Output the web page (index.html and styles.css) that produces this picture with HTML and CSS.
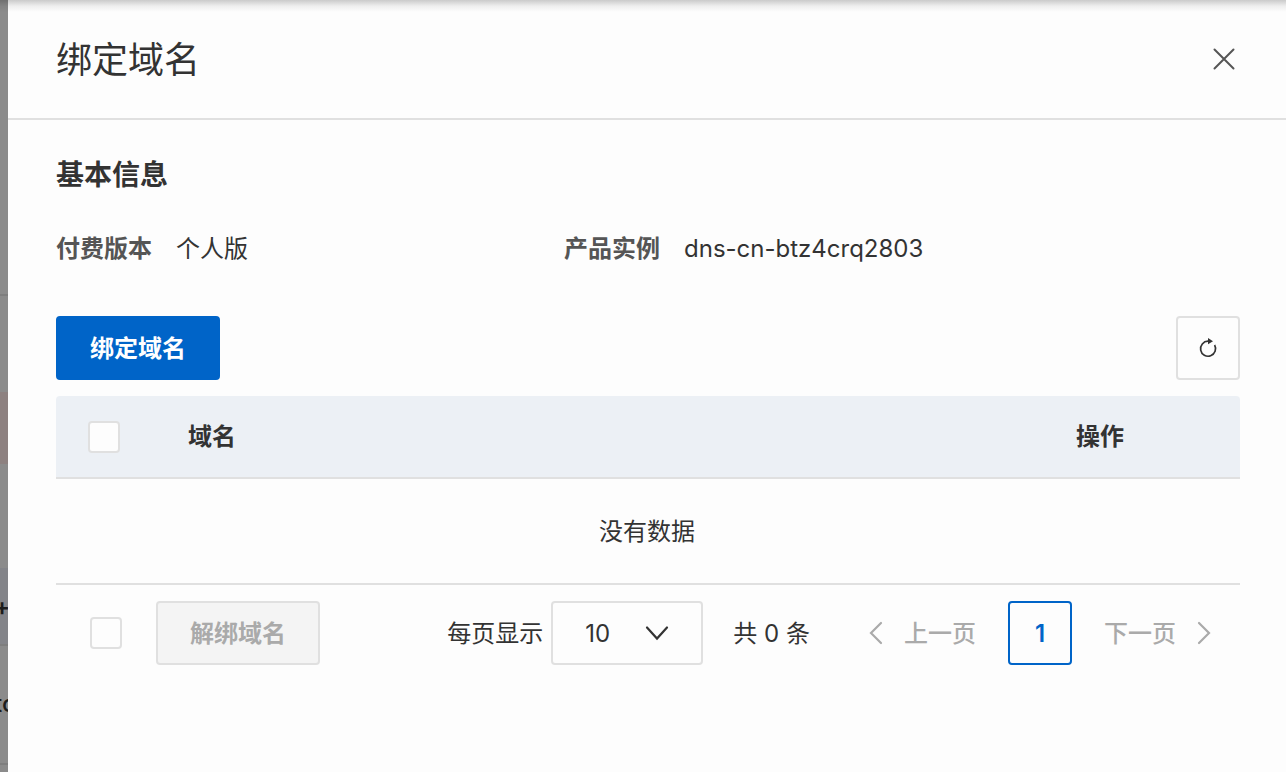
FILE: index.html
```html
<!DOCTYPE html>
<html lang="zh-CN">

<head>
    <meta charset="UTF-8">
    <meta name="viewport" content="width=device-width, initial-scale=1">
    <title>绑定域名</title>
    <link rel="stylesheet" href="styles.css">
</head>

<body>

    <div class="backdrop" aria-hidden="true">
        <div class="backdrop-row top"></div>
        <div class="backdrop-row plain"></div>
        <div class="backdrop-row warn"></div>
        <div class="backdrop-row plain"></div>
        <div class="backdrop-row head">+</div>
        <div class="backdrop-row cell">tc</div>
        <div class="backdrop-row"></div>
    </div>

    <main class="drawer">
        <header class="drawer-header">
            <h1>绑定域名</h1>
            <button class="close" type="button" aria-label="关闭">
                <svg width="24" height="24" viewBox="0 0 24 24" fill="none" stroke="#555" stroke-width="2" stroke-linecap="round">
                    <path d="M2.5 2.5l19 19M21.5 2.5l-19 19" />
                </svg>
            </button>
        </header>

        <div class="drawer-body">
            <h2>基本信息</h2>
            <dl class="info">
                <div class="info-item">
                    <dt>付费版本</dt>
                    <dd>个人版</dd>
                </div>
                <div class="info-item">
                    <dt>产品实例</dt>
                    <dd>dns-cn-btz4crq2803</dd>
                </div>
            </dl>

            <div class="toolbar">
                <button class="btn btn-primary" type="button">绑定域名</button>
                <button class="btn btn-icon" type="button" aria-label="刷新">
                    <svg width="20" height="20" viewBox="0 0 20 20">
                        <path d="M12 3.200H10A7.500 7.500 0 1 0 16.600 7" fill="none" stroke="#333" stroke-width="1.700" />
                        <path d="M10 0l5 3.200-5 3z" fill="#333" />
                    </svg>
                </button>
            </div>

            <table class="table">
                <thead>
                    <tr>
                        <th class="col-check"><input class="check" type="checkbox" aria-label="全选"></th>
                        <th>域名</th>
                        <th class="col-action">操作</th>
                    </tr>
                </thead>
                <tbody>
                    <tr>
                        <td class="empty" colspan="3">没有数据</td>
                    </tr>
                </tbody>
            </table>

            <footer class="footer">
                <div class="batch">
                    <input class="check" type="checkbox" aria-label="全选当前页">
                    <button class="btn" type="button" disabled>解绑域名</button>
                </div>
                <nav class="pager">
                    <label for="page-size">每页显示</label>
                    <div class="select">
                        <select id="page-size">
                            <option>10</option>
                            <option>20</option>
                            <option>50</option>
                        </select>
                        <svg class="arrow" width="24" height="16" viewBox="0 0 24 16" fill="none" stroke="#333" stroke-width="2.2" stroke-linecap="round">
                            <path d="M2 2.5l10 11 10-11" />
                        </svg>
                    </div>
                    <span class="total">共 0 条</span>
                    <button class="page-step prev" type="button" disabled>
                        <svg width="16" height="24" viewBox="0 0 16 24" fill="none" stroke="#aaa" stroke-width="2.2" stroke-linecap="round">
                            <path d="M13 2L3 12l10 10" />
                        </svg>
                        <span>上一页</span>
                    </button>
                    <button class="page-current" type="button">1</button>
                    <button class="page-step next" type="button" disabled>
                        <span>下一页</span>
                        <svg width="16" height="24" viewBox="0 0 16 24" fill="none" stroke="#aaa" stroke-width="2.2" stroke-linecap="round">
                            <path d="M3 2l10 10L3 22" />
                        </svg>
                    </button>
                </nav>
            </footer>
        </div>
    </main>

</body>

</html>
```

FILE: styles.css
```css
* {
    box-sizing: border-box;
}

body {
    display: flex;
    min-height: 100vh;
    margin: 0;
    background-color: #fdfdfd;
    color: #333;
    font-family: Inter, "Noto Sans CJK SC", sans-serif;
    font-size: 24px;
    line-height: 36px;
}

body::before {
    content: "";
    position: absolute;
    top: 0;
    left: 0;
    right: 0;
    height: 12px;
    background: linear-gradient(rgba(0, 0, 0, 0.2), rgba(0, 0, 0, 0.06) 50%, rgba(0, 0, 0, 0));
}

h1, h2, dl, dd {
    margin: 0;
}

button, select {
    font: inherit;
    color: inherit;
}

svg {
    display: block;
    flex: none;
}

/* page behind the drawer */
.backdrop {
    display: flex;
    flex-direction: column;
    width: 8px;
    overflow: hidden;
    background-color: #8b8b8b;
    color: #1c1c1c;
}

.backdrop-row {
    white-space: nowrap;
}

.top {
    height: 296px;
    border-bottom: 2px solid #7e7e7e;
}

.plain {
    height: 96px;
}

.warn {
    height: 72px;
    background-color: #8d8180;
}

.head {
    height: 78px;
    margin-top: 8px;
    border-bottom: 2px solid #7e7e7e;
    background-color: #838489;
    font-weight: 600;
    line-height: 78px;
    text-indent: -6px;
}

.cell {
    height: 119px;
    border-bottom: 2px solid #7e7e7e;
    font-weight: 500;
    line-height: 116px;
    text-indent: -6px;
}

.drawer {
    flex: 1;
    min-width: 0;
}

.drawer-header {
    display: flex;
    align-items: center;
    justify-content: space-between;
    height: 120px;
    padding: 0 46px 0 48px;
    border-bottom: 2px solid #e0e0e0;
}

h1 {
    padding-top: 2px;
    font-size: 36px;
    font-weight: 400;
    line-height: 48px;
}

.close {
    padding: 4px;
    border: 0;
    background: none;
}

.drawer-body {
    padding: 33px 46px 48px 48px;
}

h2 {
    font-size: 28px;
    font-weight: 600;
    line-height: 44px;
}

.info {
    display: flex;
    padding: 34px 0 49px;
}

.info-item {
    display: flex;
    flex: 0 0 508px;
    gap: 24px;
}

dt {
    color: #555;
    font-weight: 600;
}

.toolbar {
    display: flex;
    justify-content: space-between;
    margin-bottom: 16px;
}

.btn {
    height: 64px;
    padding: 2px 32px 0;
    border: 2px solid #e0e0e0;
    border-radius: 4px;
    background-color: #fdfdfd;
    font-weight: 600;
}

.btn-primary {
    border-color: #0064c8;
    background-color: #0064c8;
    color: #fff;
}

.btn-icon {
    display: flex;
    align-items: center;
    justify-content: center;
    width: 64px;
    padding: 0;
}

.btn:disabled {
    background-color: #f4f4f4;
    color: #aaa;
}

.check {
    display: block;
    appearance: none;
    width: 32px;
    height: 32px;
    margin: 0;
    border: 2px solid #e0e0e0;
    border-radius: 4px;
    background-color: #fdfdfd;
}

.table {
    width: 100%;
    border-spacing: 0;
    table-layout: fixed;
}

th {
    height: 83px;
    padding: 0 32px;
    border-bottom: 2px solid #e0e0e0;
    background-color: #ecf0f5;
    font-weight: 600;
    text-align: left;
}

th:first-child {
    border-top-left-radius: 4px;
}

th:last-child {
    border-top-right-radius: 4px;
}

.col-check {
    width: 100px;
}

.col-action {
    width: 196px;
}

.empty {
    height: 106px;
    padding: 2px 2px 0 0;
    border-bottom: 2px solid #e0e0e0;
    text-align: center;
}

.footer {
    display: flex;
    align-items: center;
    justify-content: space-between;
    padding-top: 16px;
}

.batch {
    display: flex;
    align-items: center;
    gap: 34px;
    padding-left: 34px;
}

.pager {
    display: flex;
    align-items: center;
}

.pager label,
.pager span {
    padding-top: 2px;
}

.select {
    position: relative;
    margin: 0 30px 0 8px;
}

select {
    display: block;
    appearance: none;
    width: 152px;
    height: 64px;
    padding: 2px 32px 0;
    border: 2px solid #e0e0e0;
    border-radius: 4px;
    background-color: #fdfdfd;
}

.arrow {
    position: absolute;
    top: 24px;
    right: 34px;
    pointer-events: none;
}

.page-step {
    display: flex;
    align-items: center;
    gap: 20px;
    height: 64px;
    border: 0;
    background: none;
    color: #aaa;
    font-weight: 500;
}

.prev {
    padding: 0 32px 0 58px;
}

.next {
    padding: 0 28px 0 32px;
}

.page-current {
    width: 64px;
    height: 64px;
    padding: 2px 0 0;
    border: 2px solid #0064c8;
    border-radius: 4px;
    background-color: #fdfdfd;
    color: #0064c8;
    font-weight: 600;
}
```
